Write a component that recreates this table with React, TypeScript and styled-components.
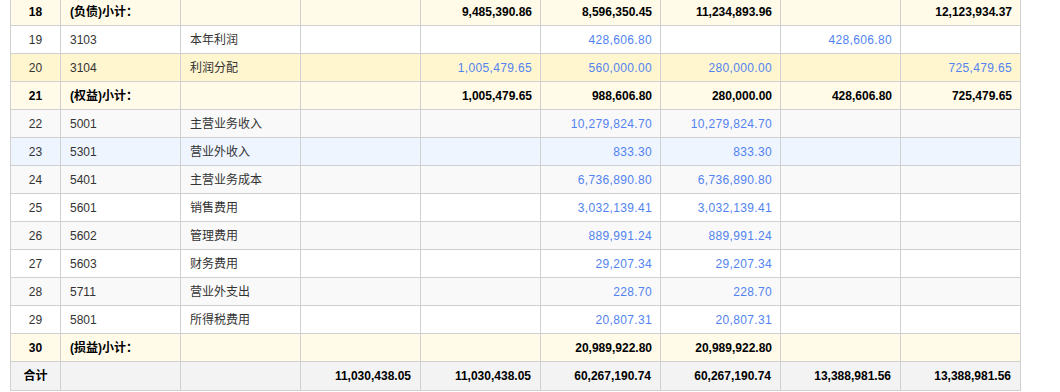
import React from "react";
import styled, { createGlobalStyle } from "styled-components";

const Global = createGlobalStyle`
  html, body { margin: 0; padding: 0; background: #fff; overflow: hidden; }
  body { font-family: "Liberation Sans", Arial, "Noto Sans CJK SC", sans-serif; font-size: 12px; }
`;

type Kind = "sub" | "odd" | "even" | "hover" | "selected" | "total";

const bg: Record<Kind, string> = {
  sub: "#fffbe8",
  odd: "#ffffff",
  even: "#f9f9f9",
  hover: "#eef5ff",
  selected: "#fff5cf",
  total: "#f3f3f3",
};

const Wrap = styled.div`
  padding-left: 10px;
  margin-top: -3px;
`;

const Table = styled.table`
  border-collapse: collapse;
  table-layout: fixed;
  width: 1011px;
  font-family: "Liberation Sans", Arial, "Noto Sans CJK SC", sans-serif;
  font-size: 12px;
`;

const Row = styled.tr<{ $kind: Kind }>`
  height: ${(p) => (p.$kind === "total" ? 29 : 28)}px;
  background: ${(p) => bg[p.$kind]};
`;

const Cell = styled.td<{ $align?: "left" | "center" | "right"; $bold?: boolean; $num?: boolean; $pad?: number }>`
  border: 1px solid #d0d0d0;
  padding: 0 ${(p) => (p.$pad ?? 8)}px 0 ${(p) => (p.$align === "left" ? 9 : 8)}px;
  text-align: ${(p) => p.$align ?? "right"};
  font-weight: ${(p) => (p.$bold ? "bold" : "normal")};
  color: ${(p) => (p.$bold ? "#000" : p.$num ? "#5283f0" : "#333")};
  letter-spacing: ${(p) => (p.$num && !p.$bold ? "0.35px" : "0")};
  white-space: nowrap;
  overflow: hidden;
  line-height: 14px;
`;

type RowData = {
  no: string;
  code: string;
  name: string;
  vals: string[];
  kind: Kind;
};

const rows: RowData[] = [
  { no: "18", code: "(负债)小计：", name: "", vals: ["", "9,485,390.86", "8,596,350.45", "11,234,893.96", "", "12,123,934.37"], kind: "sub" },
  { no: "19", code: "3103", name: "本年利润", vals: ["", "", "428,606.80", "", "428,606.80", ""], kind: "odd" },
  { no: "20", code: "3104", name: "利润分配", vals: ["", "1,005,479.65", "560,000.00", "280,000.00", "", "725,479.65"], kind: "selected" },
  { no: "21", code: "(权益)小计：", name: "", vals: ["", "1,005,479.65", "988,606.80", "280,000.00", "428,606.80", "725,479.65"], kind: "sub" },
  { no: "22", code: "5001", name: "主营业务收入", vals: ["", "", "10,279,824.70", "10,279,824.70", "", ""], kind: "even" },
  { no: "23", code: "5301", name: "营业外收入", vals: ["", "", "833.30", "833.30", "", ""], kind: "hover" },
  { no: "24", code: "5401", name: "主营业务成本", vals: ["", "", "6,736,890.80", "6,736,890.80", "", ""], kind: "even" },
  { no: "25", code: "5601", name: "销售费用", vals: ["", "", "3,032,139.41", "3,032,139.41", "", ""], kind: "odd" },
  { no: "26", code: "5602", name: "管理费用", vals: ["", "", "889,991.24", "889,991.24", "", ""], kind: "even" },
  { no: "27", code: "5603", name: "财务费用", vals: ["", "", "29,207.34", "29,207.34", "", ""], kind: "odd" },
  { no: "28", code: "5711", name: "营业外支出", vals: ["", "", "228.70", "228.70", "", ""], kind: "even" },
  { no: "29", code: "5801", name: "所得税费用", vals: ["", "", "20,807.31", "20,807.31", "", ""], kind: "odd" },
  { no: "30", code: "(损益)小计：", name: "", vals: ["", "", "20,989,922.80", "20,989,922.80", "", ""], kind: "sub" },
];

const totals = ["11,030,438.05", "11,030,438.05", "60,267,190.74", "60,267,190.74", "13,388,981.56", "13,388,981.56"];

export default function App() {
  return (
    <>
      <Global />
      <Wrap>
        <Table>
          <colgroup>
            <col style={{ width: 50 }} />
            {Array.from({ length: 8 }).map((_, i) => (
              <col key={i} style={{ width: 120 }} />
            ))}
          </colgroup>
          <tbody>
            {rows.map((r) => {
              const sub = r.kind === "sub";
              return (
                <Row key={r.no} $kind={r.kind}>
                  <Cell $align="center" $bold={sub}>{r.no}</Cell>
                  <Cell $align="left" $bold={sub}>{r.code}</Cell>
                  <Cell $align="left">{r.name}</Cell>
                  {r.vals.map((v, i) => (
                    <Cell key={i} $bold={sub} $num>
                      {v}
                    </Cell>
                  ))}
                </Row>
              );
            })}
          </tbody>
          <tfoot>
            <Row $kind="total">
              <Cell $align="center" $bold>合计</Cell>
              <Cell $align="left" />
              <Cell $align="left" />
              {totals.map((v, i) => (
                <Cell key={i} $bold $pad={9}>
                  {v}
                </Cell>
              ))}
            </Row>
          </tfoot>
        </Table>
      </Wrap>
    </>
  );
}
